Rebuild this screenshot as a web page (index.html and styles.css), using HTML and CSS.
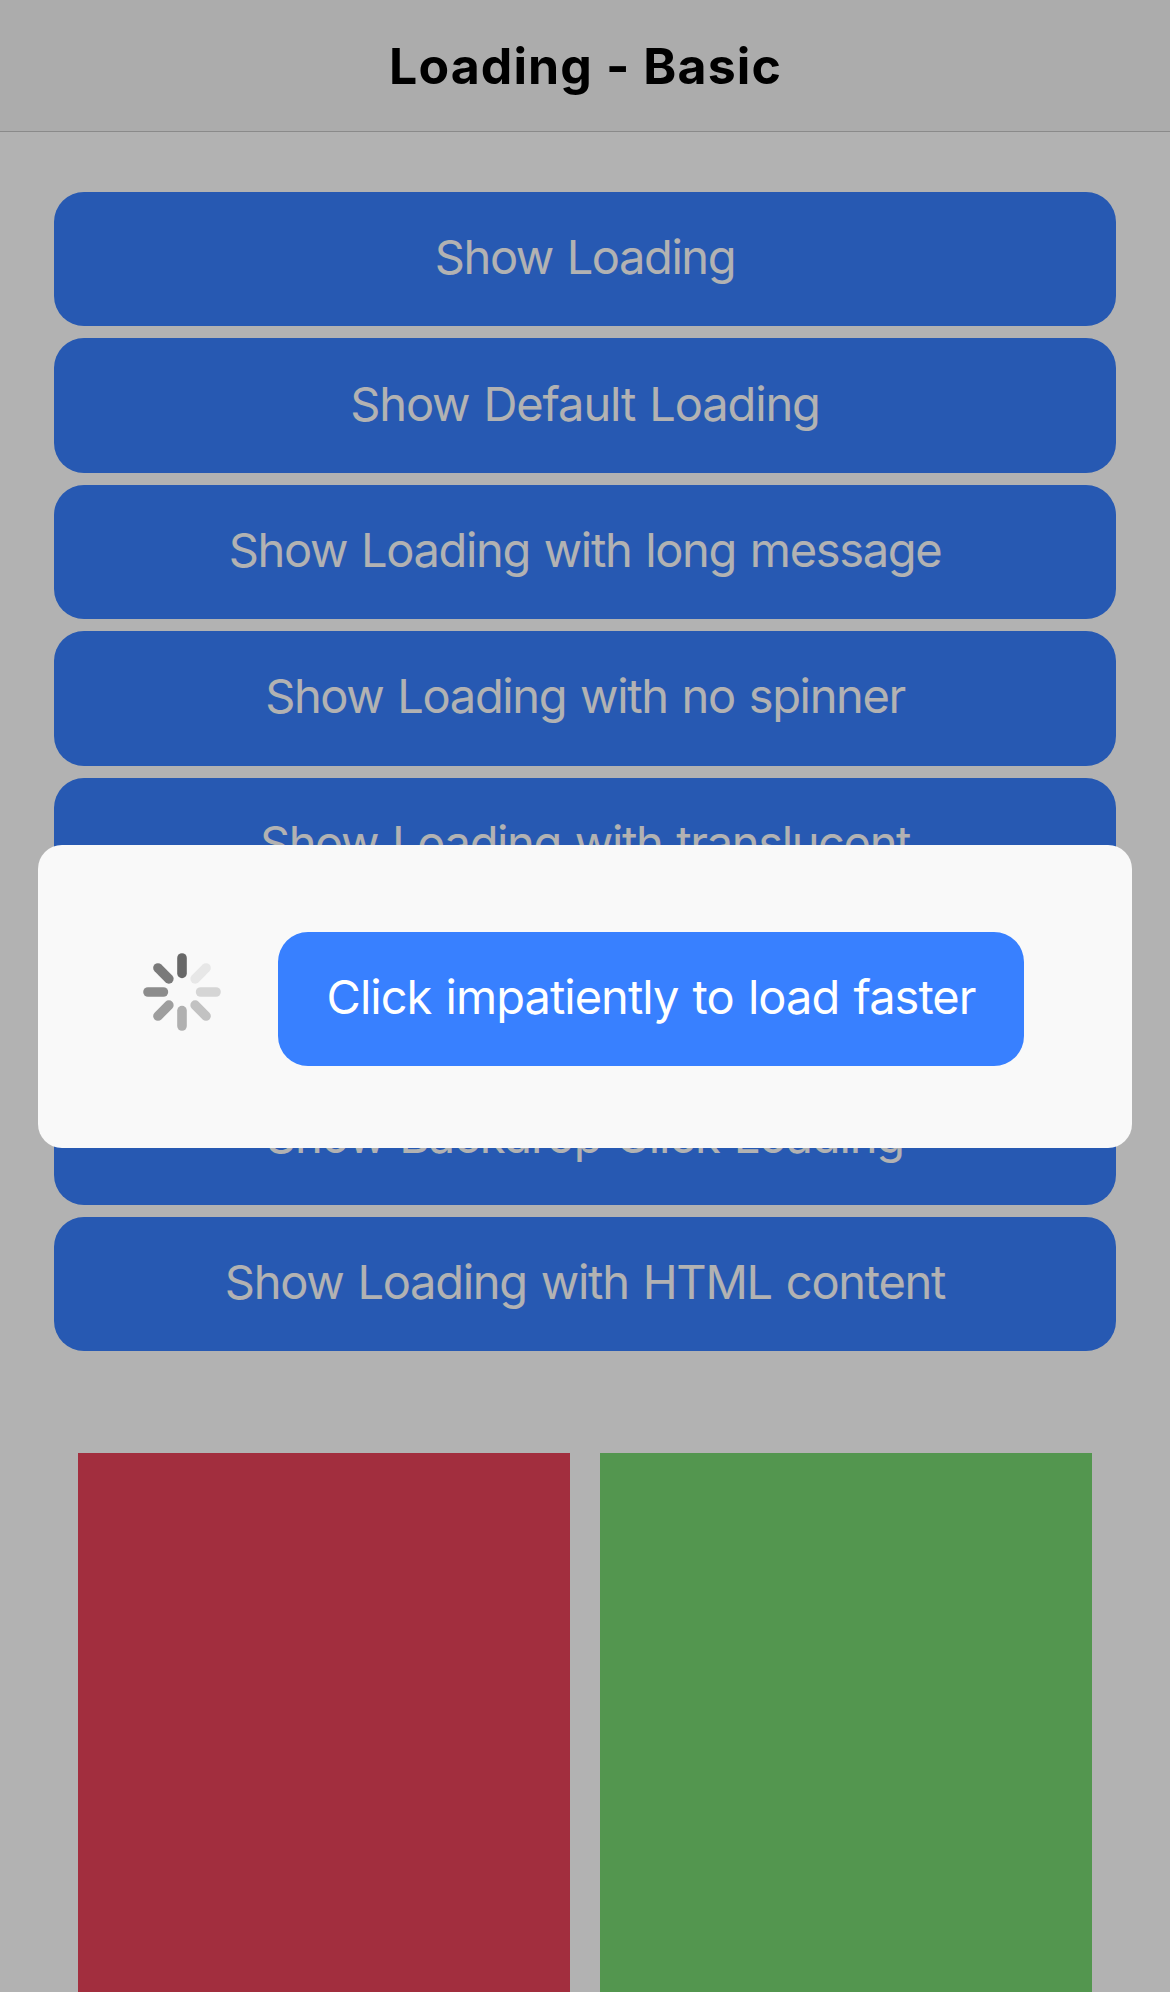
FILE: index.html
```html
<!DOCTYPE html>
<html lang="en">
<head>
<meta charset="utf-8">
<title>Loading - Basic</title>
<link rel="stylesheet" href="styles.css">
</head>
<body>
<div class="app">
  <header class="toolbar"><h1 class="title">Loading - Basic</h1></header>
  <main class="content">
    <div class="button-list">
      <button class="button label-basic">Show Loading</button>
      <button class="button label-default">Show Default Loading</button>
      <button class="button label-long">Show Loading with long message</button>
      <button class="button label-plain">Show Loading with no spinner</button>
      <button class="button label-translucent">Show Loading with translucent</button>
      <button class="button"></button>
      <button class="button label-backdrop">Show Backdrop Click Loading</button>
      <button class="button label-html">Show Loading with HTML content</button>
    </div>
    <div class="tiles">
      <div class="tile-red"></div>
      <div class="tile-green"></div>
    </div>
  </main>
</div>
<div class="backdrop">
  <div class="loading" role="dialog">
    <svg class="spinner" viewBox="-40 -40 80 80" aria-hidden="true">
      <line y1="-34" y2="-18.6" stroke="#686868"/>
      <line y1="-34" y2="-18.6" stroke="#e7e7e7" transform="rotate(45)"/>
      <line y1="-34" y2="-18.6" stroke="#d5d5d5" transform="rotate(90)"/>
      <line y1="-34" y2="-18.6" stroke="#c2c2c2" transform="rotate(135)"/>
      <line y1="-34" y2="-18.6" stroke="#b0b0b0" transform="rotate(180)"/>
      <line y1="-34" y2="-18.6" stroke="#9e9e9e" transform="rotate(225)"/>
      <line y1="-34" y2="-18.6" stroke="#8c8c8c" transform="rotate(270)"/>
      <line y1="-34" y2="-18.6" stroke="#7a7a7a" transform="rotate(315)"/>
    </svg>
    <button class="button button-inline">Click impatiently to load faster</button>
  </div>
</div>
</body>
</html>
```
FILE: styles.css
```css
* {
  box-sizing: border-box;
}

body {
  margin: 0;
  height: 1992px;
  overflow: hidden;
  background: #fff;
  font-family: Inter, "Liberation Sans", sans-serif;
}

.app {
  height: 1992px;
  overflow: hidden;
}

.toolbar {
  display: flex;
  align-items: center;
  justify-content: center;
  height: 132px;
  border-bottom: 1px solid #c6c6c6;
  background: #f7f7f7;
}

.title {
  margin: 0;
  padding-left: 1px;
  font-size: 50px;
  font-weight: 700;
  line-height: 60px;
  letter-spacing: 1.1px;
  color: #000;
}

.content {
  padding: 60px 54px 0;
}

.button-list {
  display: flex;
  flex-direction: column;
  gap: 12px;
}

.button {
  display: flex;
  align-items: center;
  justify-content: center;
  height: 134.4px;
  padding: 0 0 5px;
  border: 0;
  border-radius: 30px;
  background: #3880ff;
  color: #fff;
  font-family: inherit;
  font-size: 47px;
  font-weight: 400;
  letter-spacing: -1.35px;
  word-spacing: 2px;
  white-space: nowrap;
}

.label-basic {
  letter-spacing: -1.42px;
}

.label-default {
  letter-spacing: -1.13px;
}

.label-backdrop {
  letter-spacing: -1.14px;
}

.label-html {
  letter-spacing: -1.27px;
}

.tiles {
  display: grid;
  grid-template-columns: 1fr 1fr;
  gap: 30px;
  height: 600px;
  margin: 101.8px 24px 0;
}

.tile-red {
  background: #e9435a;
}

.tile-green {
  background: #78d771;
}

.backdrop {
  position: fixed;
  inset: 0;
  display: flex;
  flex-direction: column;
  align-items: center;
  padding-top: 845px;
  background: rgba(0, 0, 0, 0.3);
}

.loading {
  display: flex;
  align-items: flex-start;
  width: 1094px;
  height: 303px;
  padding: 87px 0 0 104px;
  border-radius: 24px;
  background: #f9f9f9;
}

.spinner {
  flex: none;
  width: 80px;
  height: 80px;
  margin: 20px 56px 0 0;
  stroke-width: 9.6;
  stroke-linecap: round;
}

.button-inline {
  width: 746px;
  height: 134px;
  letter-spacing: -0.98px;
}
```
